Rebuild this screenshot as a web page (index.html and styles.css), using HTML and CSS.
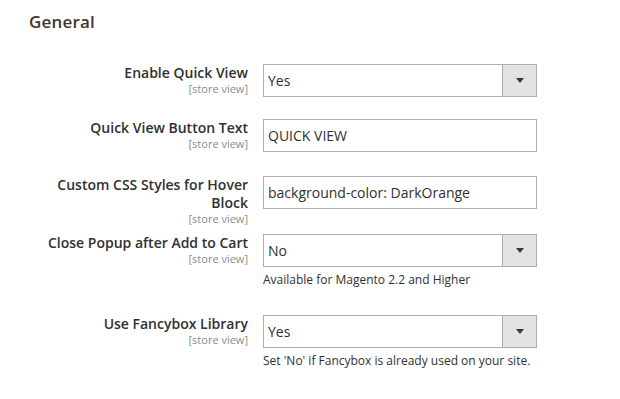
FILE: index.html
```html
<!DOCTYPE html>
<html lang="en">
<head>
    <meta charset="UTF-8">
    <meta name="viewport" content="width=device-width, initial-scale=1.0">
    <title>Quick View Settings</title>
    <link rel="stylesheet" href="styles.css">
</head>
<body>
    <div class="section">
        <h2 class="section-title">General</h2>

        <div class="config-row">
            <label class="field-label">Enable Quick View<span class="scope">[store view]</span></label>
            <div class="field-value">
                <div class="select">
                    <select>
                        <option selected>Yes</option>
                        <option>No</option>
                    </select>
                    <span class="select-btn">
                        <svg viewBox="0 0 8 5"><path d="M0 0h8L4 5z"></path></svg>
                    </span>
                </div>
            </div>
        </div>

        <div class="config-row tall">
            <label class="field-label">Quick View Button Text<span class="scope">[store view]</span></label>
            <div class="field-value">
                <input type="text" value="QUICK VIEW">
            </div>
        </div>

        <div class="config-row">
            <label class="field-label">Custom CSS Styles for Hover Block<span class="scope">[store view]</span></label>
            <div class="field-value">
                <input type="text" value="background-color: DarkOrange">
            </div>
        </div>

        <div class="config-row">
            <label class="field-label">Close Popup after Add to Cart<span class="scope">[store view]</span></label>
            <div class="field-value">
                <div class="select">
                    <select>
                        <option>Yes</option>
                        <option selected>No</option>
                    </select>
                    <span class="select-btn">
                        <svg viewBox="0 0 8 5"><path d="M0 0h8L4 5z"></path></svg>
                    </span>
                </div>
                <p class="note">Available for Magento 2.2 and Higher</p>
            </div>
        </div>

        <div class="config-row">
            <label class="field-label">Use Fancybox Library<span class="scope">[store view]</span></label>
            <div class="field-value">
                <div class="select">
                    <select>
                        <option selected>Yes</option>
                        <option>No</option>
                    </select>
                    <span class="select-btn">
                        <svg viewBox="0 0 8 5"><path d="M0 0h8L4 5z"></path></svg>
                    </span>
                </div>
                <p class="note">Set 'No' if Fancybox is already used on your site.</p>
            </div>
        </div>
    </div>
</body>
</html>
```

FILE: styles.css
```css
:root {
    --text: #303030;
    --title: #41362f;
    --muted: #8a8a8a;
    --border: #adadad;
    --btn-bg: #e3e3e3;
}

* {
    margin: 0;
    padding: 0;
    box-sizing: border-box;
}

body {
    font-family: 'Open Sans', 'Liberation Sans', sans-serif;
    background: #ffffff;
    color: var(--text);
}

.section {
    padding-left: 29px;
}

.section-title {
    font-size: 17px;
    font-weight: 600;
    line-height: 20px;
    letter-spacing: 0.01em;
    color: var(--title);
    margin: 12px 0 32px;
}

.config-row {
    display: grid;
    grid-template-columns: 219px 274px;
    column-gap: 15px;
    align-items: start;
    padding-bottom: 22px;
}

.config-row.tall {
    padding-bottom: 24px;
}

.field-label {
    display: block;
    text-align: right;
    font-size: 14px;
    font-weight: 600;
    line-height: 18px;
    color: var(--text);
}

.scope {
    display: block;
    font-size: 11px;
    font-weight: 400;
    line-height: 13px;
    color: var(--muted);
    margin-bottom: -13px;
}

.field-value input,
.select {
    width: 100%;
    height: 33px;
    border: 1px solid var(--border);
    background: #ffffff;
}

.field-value input {
    padding: 0 4px;
    font-family: inherit;
    font-size: 14px;
    color: var(--text);
    outline: none;
}

.select {
    display: flex;
}

.select select {
    flex: 1;
    min-width: 0;
    border: none;
    background: transparent;
    appearance: none;
    -webkit-appearance: none;
    padding: 0 4px;
    font-family: inherit;
    font-size: 14px;
    color: var(--text);
    outline: none;
}

.select-btn {
    width: 34px;
    background: var(--btn-bg);
    border-left: 1px solid var(--border);
    display: flex;
    align-items: center;
    justify-content: center;
}

.select-btn svg {
    width: 8px;
    height: 5px;
    fill: #41362f;
}

.note {
    font-size: 12px;
    line-height: 18px;
    padding-top: 4px;
    margin-bottom: 4px;
    color: var(--text);
}
```
